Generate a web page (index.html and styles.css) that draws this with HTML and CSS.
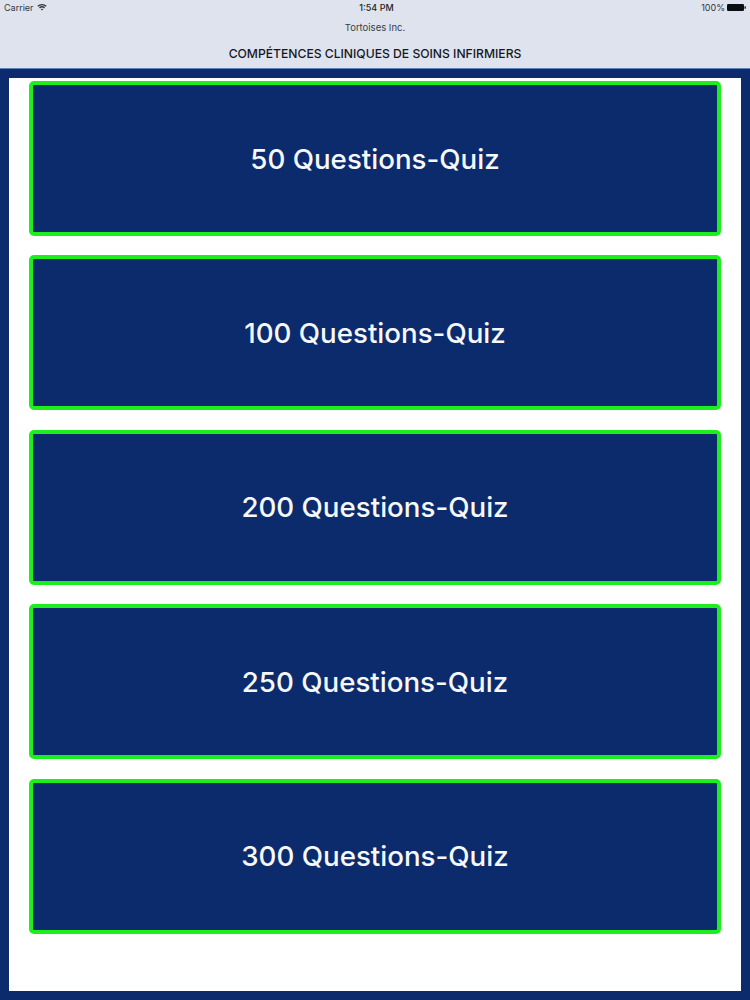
FILE: index.html
```html
<!DOCTYPE html>
<html lang="fr">
<head>
<meta charset="utf-8">
<title>Compétences cliniques de soins infirmiers</title>
<link rel="stylesheet" href="styles.css">
</head>
<body>
<header class="topbar">
  <div class="status">
    <div class="status-left">
      <span>Carrier</span>
      <svg class="wifi" viewBox="0 0 16 12" aria-hidden="true">
        <path d="M0.5 4 A11 11 0 0 1 15.5 4 L13.9 5.7 A8.8 8.8 0 0 0 2.1 5.7 Z"/>
        <path d="M3.2 6.8 A7 7 0 0 1 12.8 6.8 L11.2 8.4 A4.8 4.8 0 0 0 4.8 8.4 Z"/>
        <path d="M6 9.5 A3 3 0 0 1 10 9.5 L8 11.6 Z"/>
      </svg>
    </div>
    <div class="status-time">1:54 PM</div>
    <div class="status-right">
      <span>100%</span>
      <svg class="battery" viewBox="0 0 19 7" aria-hidden="true">
        <rect x="0" y="0" width="17" height="7" rx="1.2"/>
        <rect x="17.5" y="2.2" width="1.3" height="2.6" rx="0.5"/>
      </svg>
    </div>
  </div>
  <div class="company">Tortoises Inc.</div>
  <h1 class="title">COMPÉTENCES CLINIQUES DE SOINS INFIRMIERS</h1>
</header>
<main class="panel">
  <a class="quiz" href="#">50 Questions-Quiz</a>
  <a class="quiz" href="#">100 Questions-Quiz</a>
  <a class="quiz" href="#">200 Questions-Quiz</a>
  <a class="quiz" href="#">250 Questions-Quiz</a>
  <a class="quiz" href="#">300 Questions-Quiz</a>
</main>
</body>
</html>
```
FILE: styles.css
```css
* {
  box-sizing: border-box;
}

html,
body {
  margin: 0;
  height: 1000px;
  overflow: hidden;
}

body {
  display: flex;
  flex-direction: column;
  background: #0c2b6c;
  font-family: Inter, "Liberation Sans", sans-serif;
}

.topbar {
  height: 69px;
  flex: none;
  background: #dfe3ee;
  border-bottom: 1px solid #5f7fb5;
  color: #1c1f28;
  display: flex;
  flex-direction: column;
  align-items: center;
}

.status {
  width: 100%;
  height: 14px;
  padding: 0 4px;
  display: grid;
  grid-template-columns: 1fr auto 1fr;
  align-items: center;
  font-size: 9px;
  color: #33363e;
}

.status-left {
  display: flex;
  align-items: center;
  gap: 3px;
}

.status-time {
  font-weight: 500;
  color: #1c1f28;
  padding-left: 3px;
}

.status-right {
  display: flex;
  align-items: center;
  justify-content: flex-end;
  gap: 2px;
}

.wifi {
  width: 10px;
  height: 8px;
  fill: #33363e;
}

.battery {
  width: 19px;
  height: 7px;
  fill: #0c0d12;
}

.company {
  margin-top: 8px;
  height: 12px;
  line-height: 12px;
  font-size: 9.5px;
  color: #3a3d45;
}

.title {
  margin: 12px 0 0;
  height: 16px;
  line-height: 16px;
  font-size: 12.15px;
  font-weight: 500;
  color: #15171e;
  white-space: nowrap;
}

.panel {
  flex: none;
  height: 913px;
  margin: 9px 9px 0;
  padding: 3px 20px 0;
  background: #ffffff;
  display: flex;
  flex-direction: column;
  gap: 19.4px;
}

.quiz {
  height: 155px;
  flex: none;
  display: flex;
  align-items: center;
  justify-content: center;
  background: #0c2b6c;
  border: 4px solid #1cf01c;
  border-radius: 5px;
  color: #f6f8fc;
  font-size: 27.7px;
  font-weight: 550;
  text-decoration: none;
}
```
